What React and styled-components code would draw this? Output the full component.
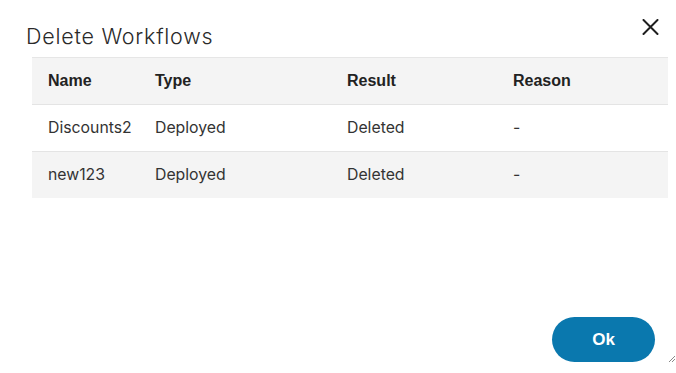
import React from 'react';
import styled, { createGlobalStyle } from 'styled-components';

const GlobalStyle = createGlobalStyle`
  html, body {
    margin: 0;
    padding: 0;
    background: #fff;
  }
  * { box-sizing: border-box; }
`;

const Dialog = styled.div`
  position: relative;
  width: 676px;
  height: 373px;
  background: #fff;
  display: flex;
  flex-direction: column;
  font-family: Inter, 'Noto Sans', sans-serif;
  color: #2b2b2b;
`;

const Header = styled.div`
  display: flex;
  justify-content: space-between;
  align-items: flex-start;
  padding: 22px 17px 0 26px;
  height: 57px;
`;

const Title = styled.h2`
  margin: 0;
  font-size: 21.5px;
  font-weight: 300;
  letter-spacing: 0.75px;
  color: #2a2a2a;
  line-height: 28px;
`;

const CloseButton = styled.button`
  border: none;
  background: none;
  padding: 0;
  margin-top: -4px;
  width: 18px;
  height: 18px;
  cursor: pointer;
  display: flex;
  align-items: center;
  justify-content: center;
`;

const Table = styled.div`
  margin: 0 8px 0 32px;
  display: flex;
  flex-direction: column;
`;

const Row = styled.div`
  display: grid;
  grid-template-columns: 107px 192px 166px 1fr;
  align-items: center;
  height: 47px;
  padding-left: 16px;
  background: ${p => (p.$shaded ? '#f4f4f4' : '#fff')};
  border-top: 1px solid ${p => (p.$head ? '#e6e6e6' : '#e4e4e4')};
`;

const HeadCell = styled.div`
  font-family: 'Liberation Sans', Arial, sans-serif;
  font-weight: 700;
  font-size: 16px;
  color: #222;
`;

const Cell = styled.div`
  font-size: 15.8px;
  color: #333;
  padding-bottom: 2px;
`;

const Footer = styled.div`
  margin-top: auto;
  display: flex;
  justify-content: flex-end;
  padding: 0 21px 11px 0;
`;

const OkButton = styled.button`
  width: 103px;
  height: 45px;
  border: none;
  border-radius: 23px;
  background: #0a78ae;
  color: #fff;
  font-family: 'Liberation Sans', Arial, sans-serif;
  font-weight: 700;
  font-size: 17px;
  cursor: pointer;
`;

const ResizeHandle = styled.svg`
  position: absolute;
  right: 0;
  bottom: 10px;
`;

const rows = [
  { name: 'Discounts2', type: 'Deployed', result: 'Deleted', reason: '-' },
  { name: 'new123', type: 'Deployed', result: 'Deleted', reason: '-' },
];

export default function App() {
  return (
    <>
      <GlobalStyle />
      <Dialog>
        <Header>
          <Title>Delete Workflows</Title>
          <CloseButton aria-label="Close">
            <svg width="17" height="16" viewBox="0 0 17 16">
              <path d="M1.5 1 L15.5 15 M15.5 1 L1.5 15" stroke="#1e1e1e" strokeWidth="2" strokeLinecap="round" />
            </svg>
          </CloseButton>
        </Header>
        <Table>
          <Row $shaded $head>
            <HeadCell>Name</HeadCell>
            <HeadCell>Type</HeadCell>
            <HeadCell>Result</HeadCell>
            <HeadCell>Reason</HeadCell>
          </Row>
          {rows.map((r, i) => (
            <Row key={r.name} $shaded={i % 2 === 1}>
              <Cell>{r.name}</Cell>
              <Cell>{r.type}</Cell>
              <Cell>{r.result}</Cell>
              <Cell>{r.reason}</Cell>
            </Row>
          ))}
        </Table>
        <Footer>
          <OkButton>Ok</OkButton>
        </Footer>
        <ResizeHandle width="8" height="8" viewBox="0 0 8 8">
          <path d="M1 7 L7 1 M4 7 L7 4" stroke="#888" strokeWidth="1" />
        </ResizeHandle>
      </Dialog>
    </>
  );
}
